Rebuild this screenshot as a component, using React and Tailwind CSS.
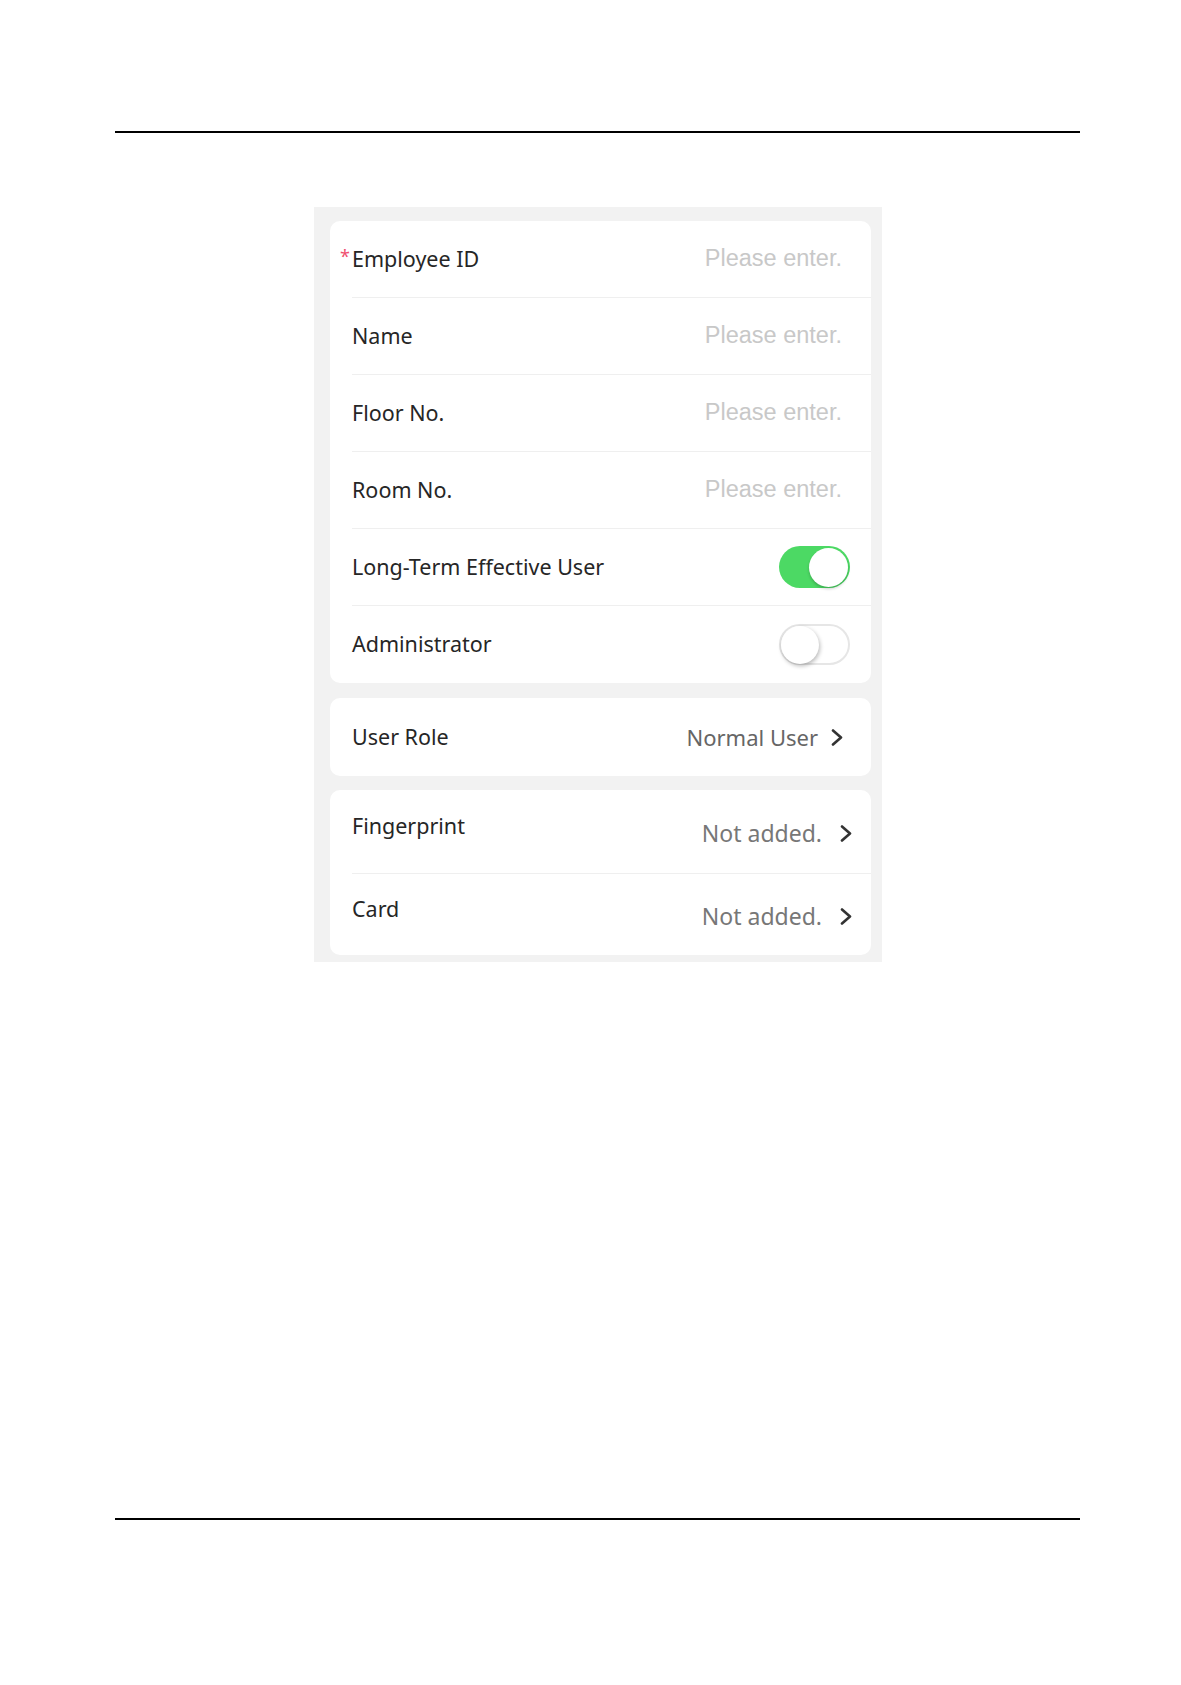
import React from 'react';

const labelFont = { fontFamily: '"Noto Sans", "Open Sans", sans-serif' };

function Chevron({ className }) {
  return (
    <svg className={className} width="14" height="17" viewBox="0 0 14 17" fill="none">
      <polyline points="3,1.5 11,8.5 3,15.5" stroke="#333" strokeWidth="2.6" strokeLinecap="round" strokeLinejoin="round" />
    </svg>
  );
}

function Toggle({ on }) {
  if (on) {
    return (
      <div className="w-[71px] h-[42px] rounded-full bg-[#4cd964] flex items-center justify-end pr-[2px]">
        <div className="w-[39px] h-[39px] rounded-full bg-white shadow-[0_2px_3px_rgba(0,0,0,0.2)]" />
      </div>
    );
  }
  return (
    <div className="w-[71px] h-[41px] rounded-full bg-white border-2 border-[#e6e6e6] flex items-center">
      <div className="w-[38px] h-[38px] rounded-full bg-white shadow-[1px_2px_4px_rgba(0,0,0,0.28)]" />
    </div>
  );
}

function InputRow({ label, required, last }) {
  return (
    <div className={`ml-[22px] h-[77px] flex items-center justify-between pr-[29px] ${last ? '' : 'border-b border-[#efefef]'}`}>
      <div className="flex items-center text-[21.5px] text-[#262626]" style={labelFont}>
        {required && <span className="-ml-[12px] w-[12px] text-[18px] text-[#f0506e] -mt-[6px]">*</span>}
        <span>{label}</span>
      </div>
      <span className="text-[23.5px] text-[#c8c8c8]" style={{ fontFamily: '"Liberation Sans", Arial, sans-serif' }}>
        Please enter.
      </span>
    </div>
  );
}

function ToggleRow({ label, on, last }) {
  return (
    <div className={`ml-[22px] h-[77px] flex items-center justify-between pr-[21px] ${last ? '' : 'border-b border-[#efefef]'}`}>
      <span className="text-[21.5px] text-[#262626]" style={labelFont}>{label}</span>
      <Toggle on={on} />
    </div>
  );
}

function LinkRow({ label, value, last }) {
  return (
    <div className={`ml-[22px] flex items-center justify-between pr-[18px] ${last ? 'h-[81px]' : 'h-[84px] border-b border-[#efefef]'}`}>
      <span className="text-[21.5px] text-[#262626] -mt-[10px]" style={labelFont}>{label}</span>
      <div className="flex items-center gap-[17px] mt-[4px]">
        <span className="text-[23px] text-[#777]" style={labelFont}>{value}</span>
        <Chevron />
      </div>
    </div>
  );
}

export default function App() {
  return (
    <div className="w-[1181px] h-[1685px] bg-white overflow-hidden">
      <div className="pt-[131px] pl-[115px]">
        <div className="w-[965px] h-[2px] bg-black" />
      </div>

      <div className="mt-[74px] ml-[314px] w-[568px] bg-[#f2f2f2] pl-[16px] pr-[11px] pt-[14px] pb-[7px]">
        {/* basic info */}
        <div className="bg-white rounded-[10px]">
          <InputRow label="Employee ID" required />
          <InputRow label="Name" />
          <InputRow label="Floor No." />
          <InputRow label="Room No." />
          <ToggleRow label="Long-Term Effective User" on />
          <ToggleRow label="Administrator" last />
        </div>

        {/* role */}
        <div className="bg-white rounded-[10px] mt-[15px]">
          <div className="ml-[22px] h-[78px] flex items-center justify-between pr-[27px]">
            <span className="text-[21.5px] text-[#262626]" style={labelFont}>User Role</span>
            <div className="flex items-center gap-[12px]">
              <span className="text-[22px] text-[#666]" style={labelFont}>Normal User</span>
              <Chevron />
            </div>
          </div>
        </div>

        {/* credentials */}
        <div className="bg-white rounded-[10px] mt-[14px]">
          <LinkRow label="Fingerprint" value="Not added." />
          <LinkRow label="Card" value="Not added." last />
        </div>
      </div>

      <div className="mt-[556px] pl-[115px]">
        <div className="w-[965px] h-[2px] bg-black" />
      </div>
    </div>
  );
}
